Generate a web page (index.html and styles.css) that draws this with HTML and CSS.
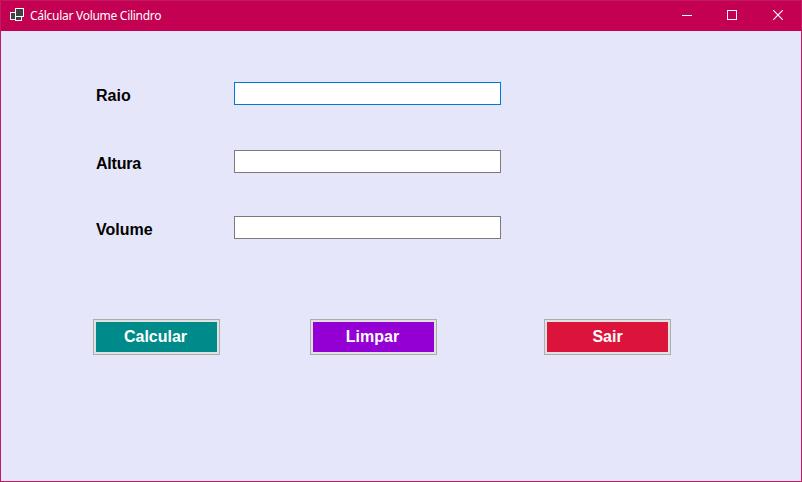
FILE: index.html
```html
<!DOCTYPE html>
<html lang="pt">
<head>
<meta charset="utf-8">
<title>Cálcular Volume Cilindro</title>
<link rel="stylesheet" href="styles.css">
</head>
<body>
<div class="window">
  <header class="titlebar">
    <svg class="app-icon" width="15" height="13" viewBox="0 0 15 13" shape-rendering="crispEdges" fill="#404040" stroke="#fff">
      <rect x=".5" y="4.5" width="5" height="7"/>
      <rect x="5.5" y="8.5" width="6" height="4"/>
      <rect x="5.5" y=".5" width="8" height="8"/>
    </svg>
    <h1 class="title">Cálcular Volume Cilindro</h1>
    <div class="controls">
      <svg width="10" height="10" viewBox="0 0 10 10"><path d="M0 5.5h10" stroke="#fff"/></svg>
      <svg width="10" height="10" viewBox="0 0 10 10"><rect x=".5" y=".5" width="9" height="9" fill="none" stroke="#fff"/></svg>
      <svg class="close" width="10" height="10" viewBox="0 0 10 10"><path d="M.2.2l9.6 9.6M9.8.2L.2 9.8" stroke="#fff" stroke-width="1.2"/></svg>
    </div>
  </header>
  <main class="form">
    <label class="row"><span class="label">Raio</span><input class="field active" type="text"></label>
    <label class="row"><span class="label tight">Altura</span><input class="field" type="text"></label>
    <label class="row"><span class="label">Volume</span><input class="field" type="text"></label>
    <div class="buttons">
      <button class="btn calc">Calcular</button>
      <button class="btn clear">Limpar</button>
      <button class="btn exit">Sair</button>
    </div>
  </main>
</div>
</body>
</html>
```
FILE: styles.css
```css
* { box-sizing: border-box; }
body { margin: 0; }
.window {
  width: 802px;
  height: 482px;
  border: 1px solid #c3195d;
  background: #e6e6fa;
  overflow: hidden;
}
.titlebar {
  display: flex;
  align-items: flex-start;
  height: 30px;
  padding: 7px 18px 0 9px;
  background: #c30052;
}
.app-icon { flex: none; }
.title {
  margin: 0 0 0 5px;
  font: 400 12px/16px "Noto Sans", "Open Sans", sans-serif;
  letter-spacing: -0.28px;
  color: #fff;
  white-space: nowrap;
}
.controls {
  display: flex;
  gap: 35px;
  margin: 2px 0 0 auto;
}
.close { margin-left: 1px; }
.form {
  padding: 51px 0 0 95px;
  font: 700 16px/23px "Liberation Sans", Arial, sans-serif;
  color: #000;
}
.row {
  display: flex;
  height: 23px;
  margin-bottom: 45px;
}
.row:nth-of-type(2) { margin-bottom: 43px; }
.label {
  width: 138px;
  padding-top: 2px;
}
.tight { letter-spacing: -0.2px; }
.field {
  width: 267px;
  height: 23px;
  border: 1px solid #7a7a7a;
  padding: 0 3px;
  background: #fff;
  font: inherit;
  outline: none;
}
.field.active { border-color: #0078d7; }
.row:nth-of-type(3) { margin-bottom: 80px; }
.buttons {
  display: grid;
  grid-template-columns: 217px 234px 127px;
  margin-left: -3px;
}
.btn {
  width: 127px;
  height: 36px;
  padding: 0 0 2px;
  border: 1px solid #adadad;
  box-shadow: inset 0 0 0 2px #e1e1e1;
  font: inherit;
  color: #fff;
}
.calc { background: #008b8b; padding-right: 2px; }
.clear { background: #9400d3; padding-right: 2px; }
.exit { background: #dc143c; }
```
